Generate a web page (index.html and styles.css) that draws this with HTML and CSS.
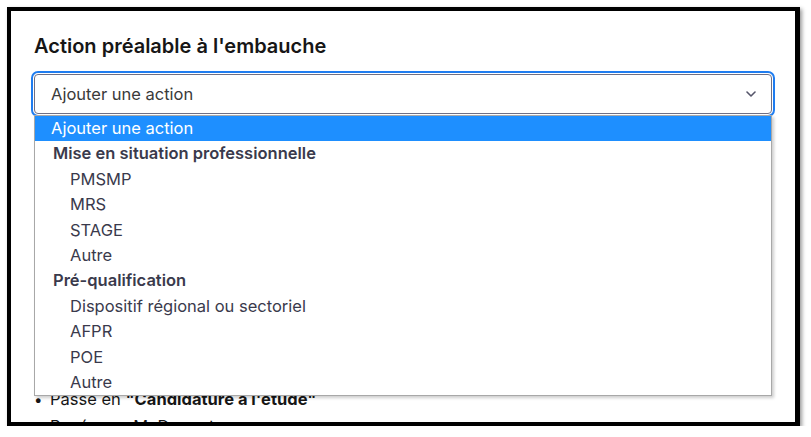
FILE: index.html
```html
<!DOCTYPE html>
<html lang="fr">
<head>
<meta charset="utf-8">
<link rel="stylesheet" href="styles.css">
</head>
<body>
<div class="frame">
  <h2 class="title">Action préalable à l'embauche</h2>
  <div class="select-wrap">
    <div class="select">
      <span class="select-value">Ajouter une action</span>
      <svg class="chevron" width="10" height="6" viewBox="0 0 10 6"><polyline points="1,1 5,5 9,1" fill="none" stroke="#55556a" stroke-width="1.6" stroke-linecap="round" stroke-linejoin="round"/></svg>
    </div>
    <ul class="dropdown">
      <li class="opt selected">Ajouter une action</li>
      <li class="group">Mise en situation professionnelle</li>
      <li class="opt sub">PMSMP</li>
      <li class="opt sub">MRS</li>
      <li class="opt sub">STAGE</li>
      <li class="opt sub">Autre</li>
      <li class="group">Pré-qualification</li>
      <li class="opt sub">Dispositif régional ou sectoriel</li>
      <li class="opt sub">AFPR</li>
      <li class="opt sub">POE</li>
      <li class="opt sub">Autre</li>
    </ul>
  </div>
  <ul class="history">
    <li>Passe en <strong>"Candidature à l'étude"</strong></li>
    <li>Posée par M. Dupont</li>
  </ul>
</div>
</body>
</html>
```

FILE: styles.css
```css
html, body {
  margin: 0;
  padding: 0;
  background: #ffffff;
}

body {
  font-family: "Inter", "Open Sans", sans-serif;
  color: #3a3a4c;
}

.frame {
  box-sizing: border-box;
  margin: 7px 0 0 7px;
  width: 793px;
  height: 419px;
  border: 4px solid #000;
  border-right-width: 5px;
  box-shadow: 2px 2px 4px rgba(0, 0, 0, 0.4);
  padding: 21px 23px 0 23px;
  overflow: hidden;
  background: #fff;
}

.title {
  margin: 0;
  font-size: 20px;
  line-height: 28px;
  font-weight: 600;
  color: #161616;
}

.select-wrap {
  position: relative;
  margin-top: 14px;
}

.select {
  box-sizing: border-box;
  height: 40px;
  border: 1px solid #707084;
  border-radius: 4px;
  outline: 2px solid #1f7df0;
  outline-offset: 1px;
  display: flex;
  align-items: center;
  justify-content: space-between;
  padding: 0 15px 0 16px;
  background: #fff;
}

.select-value {
  font-size: 16.5px;
  color: #3a3a3a;
}

.chevron {
  display: block;
}

.dropdown {
  position: absolute;
  top: 41px;
  left: 0;
  right: 0;
  margin: 0;
  padding: 0;
  list-style: none;
  background: #fff;
  border: 1px solid #a8a8a8;
  box-shadow: 2px 2px 3px rgba(0, 0, 0, 0.2);
  z-index: 2;
}

.dropdown li {
  height: 25.4px;
  line-height: 25.4px;
  font-size: 16.5px;
  white-space: nowrap;
}

.opt {
  padding-left: 16px;
  color: #3a3a4c;
}

.opt.selected {
  background: #1e8fff;
  color: #fff;
}

.opt.sub {
  padding-left: 35px;
}

.group {
  padding-left: 18px;
  font-weight: 600;
  color: #3a3a4c;
}

.history {
  margin: 272px 0 0 0;
  padding: 0;
  list-style: none;
  font-size: 16.5px;
  line-height: 26px;
  color: #161616;
}

.history li::before {
  content: "•";
  display: inline-block;
  width: 16px;
  font-size: 15px;
}

.history strong {
  font-weight: 700;
}
```
